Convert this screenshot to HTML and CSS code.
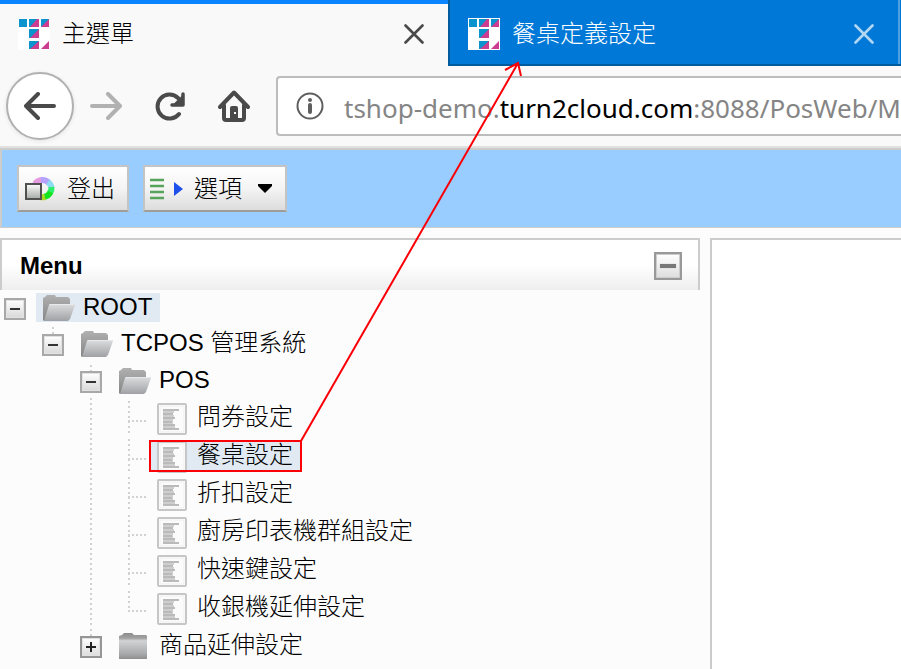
FILE: index.html
```html
<!DOCTYPE html>
<html lang="zh-Hant">
<head>
<meta charset="utf-8">
<title>主選單</title>
<link rel="stylesheet" href="styles.css">
</head>
<body>
<svg class="defs" width="0" height="0" aria-hidden="true">
  <defs>
    <linearGradient id="metal" x1="0" y1="0" x2="0" y2="1"><stop offset="0" stop-color="#dcdddf"/><stop offset="1" stop-color="#a0a1a4"/></linearGradient>
    <linearGradient id="back" x1="0" y1="0" x2="0" y2="1"><stop offset="0" stop-color="#b0b0b0"/><stop offset="1" stop-color="#858585"/></linearGradient>
    <linearGradient id="closed" x1="0" y1="0" x2="0" y2="1"><stop offset="0" stop-color="#8c8c8c"/><stop offset="0.2" stop-color="#a2a2a3"/><stop offset="0.3" stop-color="#d2d3d5"/><stop offset="0.8" stop-color="#a8a9ab"/><stop offset="1" stop-color="#8e8e8e"/></linearGradient>
    <linearGradient id="box" x1="0" y1="0" x2="0" y2="1"><stop offset="0" stop-color="#fdfdfd"/><stop offset="1" stop-color="#a5aaa5"/></linearGradient>
    <symbol id="logo" viewBox="0 0 32 32">
      <path fill="#fff" d="M0 0h32v32H0z"/>
      <path fill="#0a93cc" d="M1 1h8v8H1zM11 1h10v8H11zM23 1h8v8h-8zM11 11h10v9H11zM11 23h10v8H11z"/>
      <path fill="#cc3d91" d="M19 1h2v8h-9zM31 1v8h-8zM21 11v9h-9zM21 23v8h-9zM31 23v8h-8z"/>
    </symbol>
    <symbol id="close" viewBox="0 0 20 20"><path d="M1.500 1.500l17 17M18.500 1.500l-17 17" fill="none" stroke="currentColor" stroke-width="2.600" stroke-linecap="round"/></symbol>
    <symbol id="arrow" viewBox="0 0 32 28"><path d="M30 14H2M14 2L2 14l12 12" fill="none" stroke="currentColor" stroke-width="4" stroke-linecap="round" stroke-linejoin="round"/></symbol>
    <symbol id="folder-open" viewBox="0 0 32 26">
      <path fill="url(#back)" d="M0 3l2-1 2-2h8l1 2h12l2 2v6L22 26H1l-1-1z"/>
      <path fill="url(#metal)" d="M6 10l1-1h24.500l.5 1-5 14-2 2H1z"/>
      <path stroke="#e8e9ea" fill="none" d="M6.500 9.500H31"/>
    </symbol>
    <symbol id="folder" viewBox="0 0 28 26"><path fill="url(#closed)" d="M0 3l3-1 2-2h8l2 2h12l1 1v23H0z"/></symbol>
    <symbol id="leaf" viewBox="0 0 32 32">
      <rect x="1" y="1" width="28" height="30" rx="1" fill="#fff" stroke="#c6c6c6" stroke-width="2"/>
      <rect x="3" y="3" width="24" height="26" fill="#fbfbfb" stroke="#efefef"/>
      <path fill="#d0d0d0" d="M6 6h10v21H6z"/>
      <path stroke="#bababa" stroke-width="2" d="M6 7h16M6 11h10M6 15h12M6 19h9M6 22h12M6 26h16"/>
      <path stroke="#cecece" stroke-width="2" d="M6 9h11M6 13h11M6 17h10M6 24h12"/>
    </symbol>
  </defs>
</svg>

<header class="tabs">
  <div class="tab tab-active">
    <svg class="favicon"><use href="#logo"/></svg>
    <span class="tab-title">主選單</span>
    <button class="close" aria-label="關閉主選單"><svg width="20" height="20"><use href="#close"/></svg></button>
  </div>
  <div class="tab tab-idle">
    <svg class="favicon"><use href="#logo"/></svg>
    <span class="tab-title">餐桌定義設定</span>
    <button class="close" aria-label="關閉餐桌定義設定"><svg width="20" height="20"><use href="#close"/></svg></button>
  </div>
</header>

<nav class="browser-bar">
  <button class="back" aria-label="上一頁"><svg width="32" height="28"><use href="#arrow"/></svg></button>
  <button class="nav-button forward" aria-label="下一頁"><svg width="32" height="28"><use href="#arrow"/></svg></button>
  <button class="nav-button" aria-label="重新載入"><svg width="32" height="30" viewBox="0 0 32 30"><path d="M25 23A12 12 0 1 1 24 7" fill="none" stroke="currentColor" stroke-width="4" stroke-linecap="round"/><path d="M28.500 4V13.500H19z" fill="currentColor"/><path d="M29 3v11H18" fill="none" stroke="currentColor" stroke-width="3.500" stroke-linecap="round" stroke-linejoin="round"/></svg></button>
  <button class="nav-button" aria-label="首頁"><svg width="32" height="32" viewBox="0 0 32 32"><path d="M2 17L16 2.500 30 17M6 15v13q0 2 2 2h16q2 0 2-2V15" fill="none" stroke="currentColor" stroke-width="4" stroke-linecap="round" stroke-linejoin="round"/><path fill="currentColor" d="M12 30V18q0-2 2-2h4q2 0 2 2v12z"/><path fill="#fff" d="M16 22h2v2h-2z"/></svg></button>
  <div class="address">
    <svg class="info" width="28" height="28" viewBox="0 0 28 28"><circle cx="14" cy="14" r="12.500" fill="none" stroke="#5f5f5f" stroke-width="2"/><circle cx="14" cy="8" r="2" fill="#5f5f5f"/><path d="M14 13v7" stroke="#5f5f5f" stroke-width="4" stroke-linecap="round"/></svg>
    <span class="url" role="textbox" aria-label="網址">tshop-demo.<strong>turn2cloud.com</strong>:8088/PosWeb/M</span>
  </div>
</nav>

<div class="toolbar">
  <button class="tool">
    <svg width="32" height="26" viewBox="0 0 32 26">
      <g fill="none" stroke-width="6">
        <path stroke="#e59adf" d="M10 8A9 9 0 0 1 17 4"/><path stroke="#b4a4ff" d="M16 4A9 9 0 0 1 24 7"/><path stroke="#8fdcf0" d="M23 6A9 9 0 0 1 26.500 12"/><path stroke="#2cf06c" d="M26.500 11A9 9 0 0 1 25 17"/><path stroke="#14e420" d="M25.500 16A9 9 0 0 1 19 21"/><path stroke="#a8dc20" d="M20 21A9 9 0 0 1 15 21"/>
      </g>
      <rect x="1" y="8" width="15" height="15" fill="url(#box)" stroke="#505050" stroke-width="2"/>
    </svg>
    <span>登出</span>
  </button>
  <button class="tool options">
    <svg width="34" height="22" viewBox="0 0 34 22"><path stroke="#57a35b" stroke-width="2.500" d="M0 2h14M0 8h14M0 14h14M0 20h14"/><path fill="#1d50ea" d="M24 4l9 7-9 7z"/></svg>
    <span>選項</span>
    <svg class="caret" width="14" height="9" viewBox="0 0 14 9"><path d="M0 0h14v2L7 9 0 2z"/></svg>
  </button>
</div>

<main class="workspace">
  <section class="menu">
    <div class="menu-head">
      <h1>Menu</h1>
      <button class="collapse" aria-label="收合"><i></i></button>
    </div>
    <ul class="tree">
      <li>
        <div class="row row-root"><button class="toggle" aria-label="收合 ROOT"></button><a class="node selected" href="#root"><svg class="folder"><use href="#folder-open"/></svg>ROOT</a></div>
        <ul>
          <li>
            <div class="row linked"><button class="toggle" aria-label="收合 TCPOS"></button><a class="node" href="#tcpos"><svg class="folder"><use href="#folder-open"/></svg>TCPOS 管理系統</a></div>
            <ul>
              <li>
                <div class="row row-group linked"><button class="toggle" aria-label="收合 POS"></button><a class="node" href="#pos"><svg class="folder"><use href="#folder-open"/></svg>POS</a></div>
                <ul class="leaves">
                  <li class="row"><i class="branch"></i><a class="node" href="#survey"><svg class="leaf"><use href="#leaf"/></svg>問券設定</a></li>
                  <li class="row"><i class="branch"></i><a class="node selected" href="#table"><svg class="leaf"><use href="#leaf"/></svg>餐桌設定</a></li>
                  <li class="row"><i class="branch"></i><a class="node" href="#discount"><svg class="leaf"><use href="#leaf"/></svg>折扣設定</a></li>
                  <li class="row"><i class="branch"></i><a class="node" href="#printer"><svg class="leaf"><use href="#leaf"/></svg>廚房印表機群組設定</a></li>
                  <li class="row"><i class="branch"></i><a class="node" href="#hotkey"><svg class="leaf"><use href="#leaf"/></svg>快速鍵設定</a></li>
                  <li class="row"><i class="branch"></i><a class="node" href="#register"><svg class="leaf"><use href="#leaf"/></svg>收銀機延伸設定</a></li>
                </ul>
              </li>
              <li>
                <div class="row linked"><button class="toggle plus" aria-label="展開商品延伸設定"></button><a class="node" href="#goods"><svg class="folder"><use href="#folder" width="28" height="26"/></svg>商品延伸設定</a></div>
              </li>
            </ul>
          </li>
        </ul>
      </li>
    </ul>
  </section>
  <section class="content" aria-label="內容"></section>
</main>

<svg class="callout" width="901" height="669" viewBox="0 0 901 669" aria-hidden="true">
  <g fill="none" stroke="#fb0007" stroke-width="2"><path d="M150 441h151v30H150zM301 441L518 63M505 70l13-7 3 13"/></g>
</svg>
</body>
</html>
```
FILE: styles.css
```css
* { box-sizing: border-box; }
html { height: 100%; }
body {
  margin: 0;
  min-height: 100%;
  display: flex;
  flex-direction: column;
  overflow: hidden;
  position: relative;
  background: #fcfcfc;
  color: #000;
  font: 24px/30px "Liberation Sans", "Noto Sans CJK TC", sans-serif;
  font-weight: 300;
}
button {
  font: inherit;
  color: inherit;
  border: 0;
  padding: 0;
  background: none;
}
svg { display: block; flex: none; }
.defs, .callout { position: absolute; left: 0; top: 0; pointer-events: none; }

.tabs { display: flex; height: 66px; background: #f9f9fa; }
.tab {
  flex: 1;
  display: flex;
  align-items: center;
  padding: 4px 24px 0 18px;
}
.tab-active { flex: 0 0 448px; border-top: 4px solid #0a84ff; padding-top: 0; padding-bottom: 2px; }
.tab-idle {
  background: #0078d7;
  color: #fff;
  border-left: 2px solid #005a9e;
  border-bottom: 2px solid #005a9e;
  box-shadow: inset -1px 0 #0078d7, inset -3px 0 #4da1e3;
}
.favicon { width: 32px; height: 32px; margin-right: 12px; }
.tab-title { flex: 1; }
.close { color: #4a4a4a; }
.tab-idle .close { color: #b3d7f3; margin-right: 3px; }

.browser-bar {
  display: flex;
  align-items: center;
  height: 82px;
  padding-left: 6px;
  color: #4a4a4a;
  background: #f9f9fa;
  border-bottom: 2px solid #e0e0e0;
}
.back, .nav-button { display: flex; align-items: center; justify-content: center; flex: none; }
.back {
  width: 68px;
  height: 68px;
  border: 2px solid #b1b1b1;
  border-radius: 50%;
  background: #fff;
  box-shadow: 0 1px 4px #e4e4e4;
}
.nav-button { width: 64px; }
.forward { color: #b1b1b1; }
.forward svg { transform: scaleX(-1); }
.address {
  flex: 1;
  display: flex;
  align-items: center;
  height: 60px;
  margin-left: 10px;
  padding-left: 18px;
  border: 2px solid #bdbdbd;
  border-right: 0;
  border-radius: 4px 0 0 4px;
  background: #fff;
  overflow: hidden;
  min-width: 0;
}
.url {
  margin-left: 20px;
  padding-top: 4px;
  color: #858585;
  font: 26px/36px "Noto Sans", sans-serif;
  white-space: nowrap;
}
.url strong { color: #000; font-weight: 400; }

.toolbar {
  display: flex;
  gap: 14px;
  height: 80px;
  padding: 15px;
  border: solid #ccc;
  border-width: 2px 0 1px 2px;
  background: #99ccff;
}
.tool {
  display: flex;
  align-items: center;
  height: 47px;
  padding: 0 12px 0 6px;
  border: 2px solid #c4c4c4;
  border-bottom-color: #a09c98;
  background: linear-gradient(#fff, #f4f4f4 50%, #dcdcdc);
}
.options { padding: 0 13px 0 5px; }
.tool span { margin-left: 10px; }
.caret { margin-left: 16px; }

.workspace { flex: 1; display: flex; gap: 10px; margin-top: 10px; }
.menu { flex: 0 0 700px; }
.menu-head {
  display: flex;
  align-items: center;
  justify-content: space-between;
  height: 52px;
  padding: 2px 16px 0 18px;
  border: 2px solid #ccc;
  border-bottom: 0;
  background: linear-gradient(#fff 50%, #eee);
}
.menu-head h1 { margin: 0; font-size: 24px; line-height: 30px; }
.collapse {
  display: flex;
  align-items: center;
  justify-content: center;
  width: 28px;
  height: 28px;
  border: 2px solid #999;
  box-shadow: inset 0 0 0 1px #ccc;
  background: linear-gradient(#fff, #ddd);
}
.collapse i { width: 16px; height: 4px; background: #777; box-shadow: 0 0 1px #999; }
.content { flex: 1; border: solid #ccc; border-width: 2px 0 0 2px; background: #fff; }

.tree, .tree ul { list-style: none; margin: 0; padding: 0; }
.tree ul { padding-left: 38px; }
.row { display: flex; align-items: center; height: 38px; }
.row-root { height: 34px; }
.row-group { height: 36px; }
.linked {
  background: repeating-linear-gradient(#d2d2d2 0 2px, transparent 2px 5px) 14px 3px / 2px 8px no-repeat;
}
.toggle {
  flex: none;
  width: 22px;
  height: 22px;
  margin: 4px 10px 0 4px;
  border: 2px solid #a8a8a8;
  box-shadow: inset 0 0 0 1px #e2e2e2;
  background:
    linear-gradient(#333, #333) center / 10px 2px no-repeat,
    linear-gradient(#fff, #d8d8d8);
}
.toggle.plus {
  border-color: #969696;
  background:
    linear-gradient(#222, #222) center / 10px 2px no-repeat,
    linear-gradient(#222, #222) center / 2px 10px no-repeat,
    linear-gradient(#fff, #ddd);
}
.node {
  display: flex;
  align-items: center;
  gap: 8px;
  height: 29px;
  padding: 0 8px 0 7px;
  color: #000;
  text-decoration: none;
  white-space: nowrap;
}
.selected { background: #e1eaf2; }
.folder { width: 32px; height: 26px; margin-top: 2px; }
.leaf { width: 32px; height: 32px; margin-top: 4px; }
.leaves {
  background: repeating-linear-gradient(#d2d2d2 0 2px, transparent 2px 5px) 14px 0 / 2px 100% no-repeat;
}
.branch {
  flex: none;
  align-self: stretch;
  width: 36px;
  background:
    repeating-linear-gradient(#d2d2d2 0 2px, transparent 2px 5px) 14px 3px / 2px 100% no-repeat,
    repeating-linear-gradient(90deg, #d2d2d2 0 2px, transparent 2px 4px) 14px 22px / 19px 2px no-repeat;
}
.leaves li:last-child .branch { background-size: 2px 20px, 19px 2px; }
```
